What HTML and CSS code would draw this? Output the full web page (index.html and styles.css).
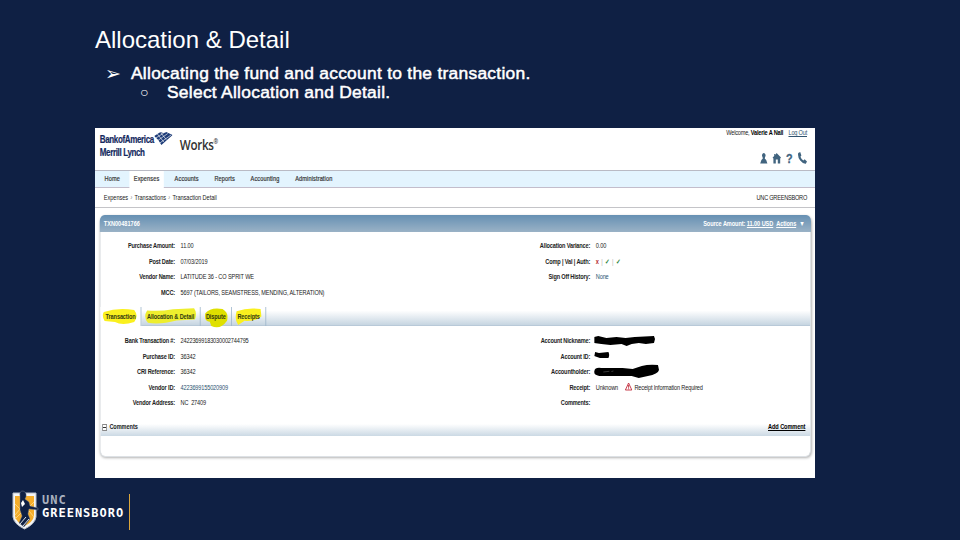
FILE: index.html
```
<!DOCTYPE html>
<html lang="en">
<head>
  <meta charset="UTF-8">
  <title>Allocation &amp; Detail</title>
  <link rel="stylesheet" href="styles.css">
</head>
<body>

<main class="slide">
  <h1>Allocation &amp; Detail</h1>
  <ul class="bullets">
    <li><span class="arrow">➢</span>Allocating the fund and account to the transaction.</li>
    <li class="sub"><span class="circle">○</span>Select Allocation and Detail.</li>
  </ul>

  <div class="frame">
    <div class="app">
      <header class="app-header">
        <div class="brand">
          <div class="bank">Bank<span>of</span>America<br>Merrill Lynch</div>
          <svg class="flag" width="23" height="15" viewBox="0 0 23 15">
            <path d="M0 5 L8 1 Q12 3 15 1 L23 4 L9 14 Q5 8 0 5Z" fill="#1d3c78"/>
            <path d="M2 7 L12 2 M4.500 9.500 L17 2.500 M7 12 L21 4 M4 3 L12 11 M8 1.500 L15 8.500" stroke="#fff" stroke-width=".7" fill="none"/>
          </svg>
          <div class="works">Works<sup>®</sup></div>
        </div>
        <div class="user">
          <div class="welcome">Welcome, <b>Valerie A Nall</b> <a>Log Out</a></div>
          <div class="icons">
            <svg width="12" height="12" viewBox="0 0 12 12"><path d="M6 1a2.400 2.400 0 0 1 1.600 4L7.200 6.500 9 8l1.500 3.500H1.500L3 8 4.800 6.500 4.400 5A2.400 2.400 0 0 1 6 1z"/></svg>
            <svg width="12" height="12" viewBox="0 0 12 12"><path d="M6 1 11.500 5.500 10.500 6.500V11.500H7.500V7.500H5V11.500H2V6.500L1 5.500 3 4V2h1.500v1z"/></svg>
            <span>?</span>
            <svg width="12" height="12" viewBox="0 0 12 12"><path d="M1 1 3.500 0 5 3.500 3.800 4.800Q5 7.500 7.500 8.500L9 7.200 12 9.500 10.500 11.700Q7 12 3.500 8.500 0 5 1 1z"/></svg>
          </div>
        </div>
      </header>

      <nav class="menu">
        <a class="m-home">Home</a>
        <a class="active">Expenses</a>
        <a class="m-acc">Accounts</a>
        <a class="m-rep">Reports</a>
        <a class="m-acct">Accounting</a>
        <a class="m-adm">Administration</a>
      </nav>

      <div class="crumbs">
        <span>Expenses <i>›</i> Transactions <i>›</i> Transaction Detail</span>
        <span class="org">UNC GREENSBORO</span>
      </div>

      <section class="panel">
        <div class="panel-head">
          <span class="txn">TXN00481766</span>
          <span>Source Amount: <u>11.00 USD</u> &nbsp;<u>Actions</u> &nbsp;▼</span>
        </div>

        <div class="columns summary">
          <dl>
            <dt>Purchase Amount:</dt><dd>11.00</dd>
            <dt>Post Date:</dt><dd>07/03/2019</dd>
            <dt>Vendor Name:</dt><dd>LATITUDE 36 - CO SPRIT WE</dd>
            <dt>MCC:</dt><dd>5697 (TAILORS, SEAMSTRESS, MENDING, ALTERATION)</dd>
          </dl>
          <dl>
            <dt>Allocation Variance:</dt><dd>0.00</dd>
            <dt>Comp | Val | Auth:</dt><dd class="checks"><b class="no">x</b><i>|</i><b>✓</b><i>|</i><b>✓</b></dd>
            <dt>Sign Off History:</dt><dd class="link">None</dd>
          </dl>
        </div>

        <div class="tabs">
          <div class="tab current">
            <svg viewBox="0 0 44 18" preserveAspectRatio="none"><path d="M2 5Q20 0 40 3Q46 9 40 15Q25 19 16 15L3 14Q-1 9 2 5z"/></svg>
            <span>Transaction</span>
          </div>
          <div class="tab t-alloc">
            <svg viewBox="0 0 62 16" preserveAspectRatio="none"><path d="M3 3Q18 4 34 2L59 1Q63 5 60 11L38 12Q18 16 4 14Q-2 9 3 3z"/></svg>
            <span>Allocation &amp; Detail</span>
          </div>
          <div class="tab t-disp">
            <svg viewBox="0 0 32 20" preserveAspectRatio="none"><path d="M2 6Q9 0 25 2Q34 6 31 13Q22 22 10 18L8 14Q0 14 2 6z"/></svg>
            <span>Dispute</span>
          </div>
          <div class="tab t-rec">
            <svg viewBox="0 0 34 17" preserveAspectRatio="none"><path d="M2 4Q17 0 32 2L33 9Q25 14 12 13L4 17Q-1 12 2 4z"/></svg>
            <span>Receipts</span>
          </div>
        </div>

        <div class="columns details">
          <dl>
            <dt>Bank Transaction #:</dt><dd>24223699183030002744795</dd>
            <dt>Purchase ID:</dt><dd>36342</dd>
            <dt>CRI Reference:</dt><dd>36342</dd>
            <dt>Vendor ID:</dt><dd class="link">4223699155020909</dd>
            <dt>Vendor Address:</dt><dd>NC &nbsp;27409</dd>
          </dl>
          <dl>
            <dt>Account Nickname:</dt>
            <dd><svg class="mark" width="76" height="11" viewBox="0 0 60 11" preserveAspectRatio="none"><path d="M0 2 4 1 12 3 22 2 31 3 40 2 59 1 60 4 59 8 51 9 44 8 37 9 32 11 27 9 16 10 7 9 0 8z"/></svg></dd>
            <dt>Account ID:</dt>
            <dd><svg class="mark" width="19" height="8" viewBox="0 0 16 8" preserveAspectRatio="none"><path d="M1 1 5 2 15 1 16 4 15 7 6 7 0 5z"/></svg></dd>
            <dt>Accountholder:</dt>
            <dd><svg class="mark holder" width="81" height="14" viewBox="0 0 64 14" preserveAspectRatio="none"><path d="M0 7Q1 3 7 4L28 4 38 5 47 2Q54 0 63 1L64 6Q63 10 53 12L44 14 37 12 20 12 5 12Q-1 11 0 7z"/><path d="M9 8 15 7.300M17 7.500 19 7" stroke="#777" stroke-width=".5"/></svg></dd>
            <dt>Receipt:</dt>
            <dd class="receipt">Unknown
              <svg class="warn" width="10" height="9" viewBox="0 0 10 9"><path d="M5 1 9 8H1z" fill="#fff" stroke="#c22a3a"/><path d="M5 3v2.800M5 6.300v1" stroke="#c22a3a"/></svg>
              Receipt Information Required</dd>
            <dt>Comments:</dt><dd></dd>
          </dl>
        </div>

        <div class="comments">
          <span><i class="minus"></i>Comments</span>
          <u>Add Comment</u>
        </div>
      </section>
    </div>
  </div>
</main>

<footer class="logo">
  <svg width="28" height="42" viewBox="0 0 28 42">
    <path d="M1 3H24V27Q23 34 12.500 39Q2 34 1 27z" fill="#f4f5f7" stroke="#b9c0cc"/>
    <path d="M3 6H22V26Q21 32 12.500 36Q4 32 3 26z" fill="#f5ad2b"/>
    <path d="M3 14 8 19 3 25M22 12 17 17M22 27 17 21M3 29 9 23" stroke="#ffd578" fill="none"/>
    <path d="M8 6Q7 1 11 1Q15 2 14 7L13 9 17 12 18 16 26 18 26 20 17 19 16 24 18 29 12 37 7 33 10 26 8 20 8 12z" fill="#0f2044" stroke="#8993a5" stroke-width=".4"/>
    <path d="M11 10 13 14 10 17 9 13z" fill="#fff"/>
    <path d="M8 34 14 27M11 36 17 29" stroke="#dfe4ec"/>
  </svg>
  <div class="wordmark"><div class="unc">UNC</div><div class="gso">GREENSBORO</div></div>
</footer>

</body>
</html>
```
FILE: styles.css
```
* {
  box-sizing: border-box;
}
body {
  margin: 0;
  width: 960px;
  height: 540px;
  overflow: hidden;
  display: flex;
  flex-direction: column;
  background: #0f2044;
  color: #fff;
  font-family: "Liberation Sans", Arial, sans-serif;
}
.slide {
  padding: 26px 0 0 95px;
  height: 490px;
}
h1 {
  margin: 0;
  font-size: 24px;
  line-height: 28px;
  font-weight: normal;
}
.bullets {
  list-style: none;
  margin: 10px 0 0;
  padding: 0;
  height: 64px;
  font-size: 17.4px;
  line-height: 19px;
  letter-spacing: 0.27px;
  -webkit-text-stroke: 0.5px #fff;
}
.bullets li {
  display: flex;
  padding-left: 10px;
}
.bullets .sub {
  padding-left: 45px;
}
.arrow {
  width: 26px;
  font-size: 19px;
  -webkit-text-stroke: 0;
}
.circle {
  width: 27px;
  font-size: 14px;
  -webkit-text-stroke: 0;
}

/* the app is laid out at 900px and squeezed into the 720px frame */
.frame {
  width: 720px;
  height: 350px;
  overflow: hidden;
  background: #fff;
}
.app {
  width: 900px;
  height: 350px;
  transform: scaleX(0.8);
  transform-origin: 0 0;
  color: #222;
  font-size: 7px;
}
.app-header {
  height: 42px;
  display: flex;
  justify-content: space-between;
}
.brand {
  display: flex;
  padding: 6px 0 0 6px;
}
.bank {
  width: 68px;
  font-size: 10px;
  line-height: 12.5px;
  font-weight: bold;
  letter-spacing: -0.45px;
  color: #14295e;
  white-space: nowrap;
  -webkit-text-stroke: 0.2px #14295e;
}
.flag {
  margin-top: -3px;
}
.works {
  margin-left: 9px;
  padding-top: 1px;
  font-family: "Open Sans", sans-serif;
  font-size: 14.5px;
  line-height: 19px;
  font-weight: 600;
  letter-spacing: -0.4px;
  color: #333;
}
.works sup {
  font-size: 7px;
  line-height: 0;
  vertical-align: 6px;
}
.user {
  padding: 1px 10px 0 0;
  text-align: right;
}
.welcome {
  line-height: 8px;
  letter-spacing: -0.25px;
}
.welcome b {
  color: #000;
}
.welcome a {
  margin-left: 5px;
  color: #31546f;
  text-decoration: underline;
}
.icons {
  display: flex;
  justify-content: flex-end;
  align-items: center;
  gap: 4px;
  height: 12px;
  margin-top: 15px;
  fill: #41647f;
  color: #41647f;
}
.icons span {
  width: 12px;
  font-size: 13.5px;
  font-weight: bold;
  text-align: center;
  -webkit-text-stroke: 0.3px #41647f;
}
.menu {
  display: flex;
  height: 18px;
  background: #e3f4fe;
  border-top: 1px solid #b9bac4;
  border-bottom: 1px solid #c3bdcb;
  line-height: 16px;
  letter-spacing: 0.15px;
  color: #333;
  -webkit-text-stroke: 0.2px #333;
}
.menu a {
  text-align: center;
  border-bottom: 1px solid transparent;
}
.m-home { width: 43px; }
.menu .active {
  width: 43px;
  height: 17px;
  background: #fff;
}
.m-acc { width: 57px; }
.m-rep { width: 38px; }
.m-acct { width: 63px; }
.m-adm { width: 59px; }
.crumbs {
  display: flex;
  justify-content: space-between;
  height: 20px;
  padding: 0 10px 0 11px;
  line-height: 20px;
  letter-spacing: -0.04px;
  border-bottom: 1px solid #c4c4c8;
}
.crumbs i {
  margin: 0 1px;
  color: #888;
}
.org {
  letter-spacing: -0.3px;
}
.panel {
  width: 889px;
  height: 242px;
  margin: 7px 0 0 6px;
  background: #fff;
  border: 1px solid #dde1e5;
  border-top: 0;
  border-radius: 7px;
  box-shadow: 1px 1px 3px rgba(0, 0, 0, 0.3);
}
.panel-head {
  display: flex;
  justify-content: space-between;
  height: 17px;
  margin: 0 -1px;
  padding: 0 8px 0 5px;
  border-radius: 6px 6px 0 0;
  background: linear-gradient(#6690b3, #9ab2c6);
  color: #fff;
  font-weight: bold;
  line-height: 17px;
  letter-spacing: -0.1px;
}
.txn {
  letter-spacing: 0;
}
.columns {
  display: flex;
}
dl {
  display: grid;
  flex: none;
  grid-template-columns: 93px 1fr;
  column-gap: 7px;
  grid-auto-rows: 15.6px;
  width: 519px;
  margin: 0;
  line-height: 15.6px;
}
dl + dl {
  width: 360px;
}
dt {
  text-align: right;
  font-weight: bold;
  letter-spacing: -0.2px;
  white-space: nowrap;
}
dd {
  margin: 0;
  letter-spacing: -0.15px;
  white-space: nowrap;
}
.summary {
  height: 75px;
  padding-top: 6px;
}
.details {
  height: 94px;
  padding-top: 7px;
}
.details dd {
  letter-spacing: -0.2px;
}
.link,
.details .link {
  color: #2b5472;
  letter-spacing: -0.2px;
}
.checks b {
  color: #2c8540;
}
.checks .no {
  color: #b3262e;
}
.checks i {
  margin: 0 3px;
  color: #aaa;
  font-style: normal;
}
.tabs {
  display: flex;
  height: 19px;
  background: linear-gradient(#fff 20%, #c6d5e1);
  border-bottom: 1px solid #b8c9d8;
  font-weight: bold;
  line-height: 20px;
  letter-spacing: -0.15px;
}
.tab {
  position: relative;
  height: 19px;
  border-right: 1px solid #9db6cb;
  text-align: center;
}
.tab span {
  position: relative;
  color: #333a10;
}
/* highlighter strokes under the labels */
.tab svg {
  position: absolute;
  left: 4px;
  top: 0;
  width: calc(100% - 8px);
  height: 18px;
  fill: #faf01e;
}
.current {
  width: 51px;
  background: #fff;
}
.tab.current svg {
  left: 2px;
  width: 44px;
}
.t-alloc { width: 74px; }
.t-alloc svg { fill: #eeee2e; }
.t-disp { width: 39px; }
.tab.t-disp svg {
  height: 21px;
  fill: #dfe000;
}
.t-rec { width: 43px; }
.mark {
  display: block;
  margin: 2px 0 0 -2px;
}
.mark.holder {
  margin-top: 0;
}
.warn {
  margin: 0 1px 0 6px;
  vertical-align: -1px;
}
.comments {
  display: flex;
  justify-content: space-between;
  height: 16px;
  padding: 0 6px 0 2px;
  background: linear-gradient(#fff 25%, #cbd9e4);
  font-weight: bold;
  line-height: 14px;
  letter-spacing: -0.1px;
}
.comments u {
  color: #000;
}
.minus {
  display: inline-block;
  width: 6px;
  height: 7px;
  margin-right: 3px;
  vertical-align: -2px;
  border: 1px solid #888;
  background: linear-gradient(#fff 2px, #333 2px, #333 3px, #fff 3px);
}
.logo {
  display: flex;
  height: 50px;
  padding-left: 12px;
}
.wordmark {
  width: 88px;
  height: 36px;
  margin: 4px 0 0 2px;
  border-right: 1px solid #dba63c;
  font-family: "DejaVu Sans Mono", monospace;
  font-weight: bold;
  white-space: nowrap;
}
.unc {
  font-size: 12px;
  line-height: 12px;
  letter-spacing: 1px;
  color: #a9b0bf;
}
.gso {
  font-size: 12px;
  line-height: 15px;
  letter-spacing: 1px;
}
```
